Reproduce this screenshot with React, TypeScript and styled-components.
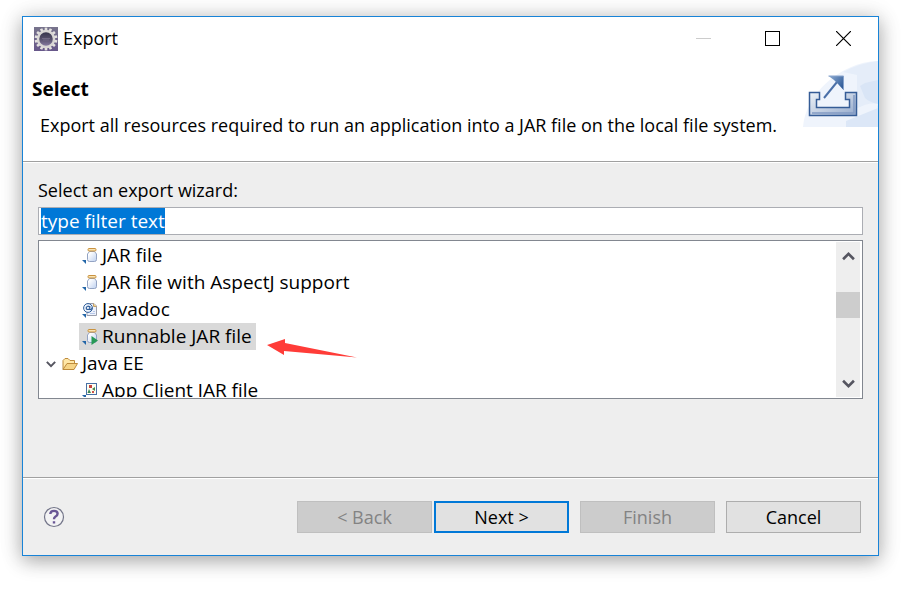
import React, { useEffect, useRef, useState } from "react";
import styled, { createGlobalStyle } from "styled-components";

const GlobalStyle = createGlobalStyle`
  *, *::before, *::after { box-sizing: border-box; }
  body {
    margin: 0;
    background: #fff;
    color: #000;
    font-family: "Open Sans", "Noto Sans", sans-serif;
    font-size: 18px;
    line-height: 27px;
  }
  button, input { font: inherit; color: inherit; }
  svg { display: block; flex: none; }
`;

const Page = styled.main`
  padding: 16px 41px 44px 22px;
`;

const Dialog = styled.section`
  border: 1px solid #1883d7;
  background: #eee;
  box-shadow: 0 5px 18px rgba(0, 0, 0, 0.3), 0 0 24px rgba(0, 0, 0, 0.1);
`;

const TitleBar = styled.header`
  display: flex;
  align-items: center;
  height: 43px;
  padding-left: 11px;
  background: #fff;
`;

const WindowTitle = styled.h1`
  flex: 1;
  margin: 0 0 0 5px;
  font-size: 18px;
  font-weight: 400;
`;

const WindowButton = styled.button`
  display: flex;
  align-items: center;
  justify-content: center;
  width: 70px;
  height: 42px;
  padding: 0;
  border: 0;
  background: transparent;
`;

const Banner = styled.div`
  display: flex;
  justify-content: space-between;
  height: 102px;
  background: #fff;
  border-bottom: 1px solid #a0a0a0;
`;

const BannerText = styled.div`
  flex: 1;
  padding: 16px 0 0 9px;
  white-space: nowrap;
`;

const BannerTitle = styled.h2`
  margin: 0 0 9px;
  font-size: 19px;
  font-weight: 700;
`;

const BannerMessage = styled.p`
  margin: 0 0 0 8px;
`;

const Content = styled.div`
  display: flex;
  flex-direction: column;
  height: 315px;
  padding: 14px 15px 0;
  border-top: 1px solid #fff;
`;

const FilterInput = styled.input`
  width: 100%;
  height: 28px;
  margin: 3px 0 5px;
  padding: 0 2px;
  border: 1px solid #abadb3;
  border-radius: 0;
  outline: 0;
  background: #fff;
  font-size: 19px;
  line-height: 24px;
  &::selection { background: #0078d7; color: #fff; }
`;

const TreePanel = styled.div`
  position: relative;
  display: flex;
  height: 159px;
  padding: 1px 2px 1px 0;
  border: 1px solid #828790;
  background: #fff;
`;

const Tree = styled.ul`
  flex: 1;
  margin: 0;
  padding: 0;
  overflow: hidden;
  font-size: 19px;
  list-style: none;
`;

const TreeRow = styled.li<{ $level: number }>`
  display: flex;
  align-items: center;
  height: 27px;
  padding-left: ${(p) => (p.$level === 0 ? 4 : 40)}px;
`;

const TreeLabel = styled.span<{ $selected?: boolean }>`
  display: flex;
  align-items: center;
  gap: 4px;
  height: 27px;
  padding: 0 4px 0 3px;
  background: ${(p) => (p.$selected ? "#d9d9d9" : "transparent")};
`;

const Toggle = styled.button`
  display: flex;
  align-items: center;
  justify-content: center;
  width: 16px;
  height: 16px;
  padding: 0;
  border: 0;
  background: transparent;
`;

const ScrollBar = styled.div`
  display: flex;
  flex-direction: column;
  width: 24px;
  background: #eee;
`;

const ScrollButton = styled.button`
  display: flex;
  align-items: center;
  justify-content: center;
  height: 28px;
  padding: 0;
  border: 0;
  background: transparent;
`;

const ScrollTrack = styled.div`
  flex: 1;
  padding-top: 22px;
`;

const ScrollThumb = styled.div`
  height: 26px;
  background: #cdcdcd;
`;

const Pointer = styled.svg`
  position: absolute;
  left: 228px;
  top: 97px;
`;

const Footer = styled.footer`
  display: flex;
  align-items: center;
  justify-content: space-between;
  height: 78px;
  padding: 0 17px 0 20px;
  border-top: 1px solid #a0a0a0;
  box-shadow: inset 0 1px 0 #fff;
`;

const HelpButton = styled.button`
  padding: 0;
  border: 0;
  background: transparent;
`;

const Actions = styled.div`
  display: flex;
  gap: 11px;
`;

const Pair = styled.div`
  display: flex;
  gap: 2px;
`;

const PushButton = styled.button<{ $primary?: boolean }>`
  width: 135px;
  height: 32px;
  padding: 0;
  border: ${(p) => (p.$primary ? "2px solid #0078d7" : "1px solid #adadad")};
  background: #e1e1e1;
  line-height: 28px;
  &:disabled {
    border-color: #bfbfbf;
    background: #ccc;
    color: #838383;
  }
`;

const teeth = Array.from({ length: 14 }, (_, i) => (i * 360) / 14);

const AppIcon = () => (
  <svg width="24" height="24" viewBox="0 0 24 24" aria-hidden="true">
    <defs>
      <linearGradient id="appBg" x1="0" y1="0" x2="0" y2="1">
        <stop offset="0" stopColor="#77748c" />
        <stop offset="1" stopColor="#67578a" />
      </linearGradient>
      <linearGradient id="appLens" x1="0" y1="0" x2="0" y2="1">
        <stop offset="0" stopColor="#303046" />
        <stop offset="0.5" stopColor="#56506b" />
        <stop offset="1" stopColor="#8c80a8" />
      </linearGradient>
    </defs>
    <rect width="24" height="24" fill="url(#appBg)" />
    {teeth.map((a) => (
      <rect key={a} x="10.7" y="0.6" width="2.6" height="4" fill="#e3e1df" transform={`rotate(${a} 12 12)`} />
    ))}
    <circle cx="12" cy="12" r="8" fill="url(#appLens)" stroke="#d9d7d5" strokeWidth="2.4" />
    <path d="M8 11.500h8M9 13h6" stroke="#77708c" strokeWidth="0.8" />
  </svg>
);

const BannerArt = () => (
  <svg width="75" height="67" viewBox="0 0 75 67" aria-hidden="true">
    <defs>
      <linearGradient id="tray" x1="0" y1="0" x2="1" y2="1">
        <stop offset="0" stopColor="#edf2f7" />
        <stop offset="0.5" stopColor="#c5d1e3" />
        <stop offset="1" stopColor="#92a8cb" />
      </linearGradient>
      <linearGradient id="arrowHead" x1="0" y1="0" x2="1" y2="0.7">
        <stop offset="0" stopColor="#8eacd3" />
        <stop offset="1" stopColor="#315c99" />
      </linearGradient>
    </defs>
    <path d="M0 67C2 36 36 2 75 1V67Z" fill="#eff4fc" />
    <path d="M40 12Q57 3 75 1V48Q65 44 54 48V15Z" fill="#e5edf9" />
    <path d="M57 26L62 23L75 20V44Q66 42 62 38Z" fill="#d9e5f6" />
    <path d="M54 49Q65 42 75 44L72 52L53 58Z" fill="#eff4fc" />
    <path d="M43 61L75 48V67H43Z" fill="#dce7f7" />
    <path d="M6.500 32.500H16.500V39.500H13.500V47.500H46.500V39.500H42.500V32.500H53.500V55.500H6.500Z" fill="url(#tray)" stroke="#355c96" strokeWidth="1.500" />
    <path d="M9 53H51V35" fill="none" stroke="#829bc3" strokeWidth="1.500" />
    <path d="M21 38L34 22" stroke="#4b70a8" strokeWidth="2" />
    <path d="M25.500 16H40.500V30L35 24L31 20Z" fill="url(#arrowHead)" />
    <path d="M25.500 16H40.500V30" fill="none" stroke="#87a3cc" />
  </svg>
);

const Badge = () => <path d="M0 12H4V16Z" fill="#2366a8" />;

const JarIcon = ({ run }: { run?: boolean }) => (
  <svg width="16" height="16" viewBox="0 0 16 16" aria-hidden="true">
    <defs>
      <linearGradient id="glass" x1="0" y1="0" x2="1" y2="1">
        <stop offset="0.2" stopColor="#fff" />
        <stop offset="1" stopColor="#bdd0f0" />
      </linearGradient>
    </defs>
    <Badge />
    <path d="M7.500 3.500H12.500L14.500 6V11.500Q14.500 13.500 12.500 13.500H7.500Q5.500 13.500 5.500 11.500V6Z" fill="url(#glass)" stroke="#93a3c3" />
    <rect x="6" y="0.500" width="8" height="2.500" rx="1" fill="#f8e3b4" stroke="#c9923f" />
    {run && <path d="M9.500 7L16 11.500L9.500 16Z" fill="#279955" />}
  </svg>
);

const JavadocIcon = () => (
  <svg width="16" height="16" viewBox="0 0 16 16" aria-hidden="true">
    <Badge />
    <path d="M5 1.500H12L14.500 4V13.500H5Z" fill="#edf2fc" stroke="#9a9ead" />
    <path d="M11.500 1.500V4.500H14.500" fill="#f4d184" stroke="#c2a069" />
    <path d="M8 11.500H13M11 9.500H13" stroke="#b7c8ea" />
    <circle cx="6" cy="6" r="4.400" fill="#edf4fd" stroke="#315f9b" />
    <path d="M7.800 4V7.500Q10 8 10 5.500M7.700 5Q5.500 3.200 4.300 5.500Q3.800 8.500 7.700 7" fill="none" stroke="#315f9b" strokeWidth="1.200" />
  </svg>
);

const ClientIcon = () => (
  <svg width="16" height="16" viewBox="0 0 16 16" aria-hidden="true">
    <Badge />
    <rect x="4.500" y="0.500" width="10" height="11" fill="#fffdf0" stroke="#4770a5" />
    <path d="M7 2H10V5H7Z" fill="#c3423d" />
    <path d="M10 6L13 4V8Z" fill="#45874b" />
    <path d="M7 6L9 10H5.500Z" fill="#3c8454" />
    <path d="M10 8H12V10H10Z" fill="#cb5149" />
  </svg>
);

const FolderIcon = () => (
  <svg width="16" height="16" viewBox="0 0 16 16" aria-hidden="true">
    <path d="M1 13.500V4.500L3 2.500H6L8 4.500H12.500V7.500" fill="#ffe7a7" stroke="#bd8a3b" />
    <path d="M1 13.500L5 7.500H15.500L12 13.500Z" fill="#f6d486" stroke="#bd8a3b" />
  </svg>
);

const Chevron = ({ up, size = 13 }: { up?: boolean; size?: number }) => (
  <svg width={size} height={size} viewBox="0 0 12 12" aria-hidden="true">
    <path
      d={up ? "M1 8.500L6 3.500L11 8.500" : "M1 3.500L6 8.500L11 3.500"}
      fill="none"
      stroke="#555560"
      strokeWidth="2.400"
    />
  </svg>
);

const items = [
  { label: "JAR file", icon: <JarIcon /> },
  { label: "JAR file with AspectJ support", icon: <JarIcon /> },
  { label: "Javadoc", icon: <JavadocIcon /> },
  { label: "Runnable JAR file", icon: <JarIcon run />, selected: true },
  { label: "Java EE", icon: <FolderIcon />, group: true },
  { label: "App Client JAR file", icon: <ClientIcon /> },
];

export default function App() {
  const filterRef = useRef<HTMLInputElement>(null);
  const [filter, setFilter] = useState("type filter text");

  useEffect(() => {
    filterRef.current?.focus();
    filterRef.current?.select();
  }, []);

  return (
    <Page>
      <GlobalStyle />
      <Dialog role="dialog" aria-labelledby="window-title">
        <TitleBar>
          <AppIcon />
          <WindowTitle id="window-title">Export</WindowTitle>
          <WindowButton aria-label="Minimize" disabled>
            <svg width="15" height="15" viewBox="0 0 15 15"><path d="M0 7.500H15" stroke="#ccc" /></svg>
          </WindowButton>
          <WindowButton aria-label="Maximize">
            <svg width="16" height="15" viewBox="0 0 16 15"><rect x="0.500" y="0.500" width="14" height="14" fill="none" stroke="#000" /></svg>
          </WindowButton>
          <WindowButton aria-label="Close">
            <svg width="15" height="15" viewBox="0 0 15 15"><path d="M0 0L15 15M15 0L0 15" stroke="#000" strokeWidth="1.200" /></svg>
          </WindowButton>
        </TitleBar>
        <Banner>
          <BannerText>
            <BannerTitle>Select</BannerTitle>
            <BannerMessage>
              Export all resources required to run an application into a JAR file on the local file system.
            </BannerMessage>
          </BannerText>
          <BannerArt />
        </Banner>
        <Content>
          <label htmlFor="filter">Select an export wizard:</label>
          <FilterInput
            id="filter"
            ref={filterRef}
            value={filter}
            spellCheck={false}
            onChange={(e) => setFilter(e.target.value)}
          />
          <TreePanel>
            <Tree>
              {items.map((item) => (
                <TreeRow key={item.label} $level={item.group ? 0 : 1}>
                  {item.group && (
                    <Toggle aria-label="Collapse Java EE">
                      <Chevron size={10} />
                    </Toggle>
                  )}
                  <TreeLabel $selected={item.selected}>
                    {item.icon}
                    {item.label}
                  </TreeLabel>
                </TreeRow>
              ))}
            </Tree>
            <ScrollBar>
              <ScrollButton aria-label="Scroll up"><Chevron up /></ScrollButton>
              <ScrollTrack><ScrollThumb /></ScrollTrack>
              <ScrollButton aria-label="Scroll down"><Chevron /></ScrollButton>
            </ScrollBar>
            <Pointer width="90" height="22" viewBox="0 0 90 22" aria-hidden="true">
              <path d="M0 7L18 1V5L90 19.500L17 13V17Z" fill="#ff3c38" />
            </Pointer>
          </TreePanel>
        </Content>
        <Footer>
          <HelpButton aria-label="Help">
            <svg width="22" height="22" viewBox="0 0 22 22">
              <circle cx="11" cy="11" r="9.500" fill="#f3f3f4" stroke="#737589" strokeWidth="1.200" />
              <path d="M7.300 8Q7.500 4.900 11 4.900Q14.600 4.900 14.600 7.700Q14.600 9.400 12.300 10.700Q11 11.500 11 13.300M11 15.200V17.500" fill="none" stroke="#6a5795" strokeWidth="2.400" />
            </svg>
          </HelpButton>
          <Actions>
            <Pair>
              <PushButton disabled>&lt; Back</PushButton>
              <PushButton $primary>Next &gt;</PushButton>
            </Pair>
            <PushButton disabled>Finish</PushButton>
            <PushButton>Cancel</PushButton>
          </Actions>
        </Footer>
      </Dialog>
    </Page>
  );
}
